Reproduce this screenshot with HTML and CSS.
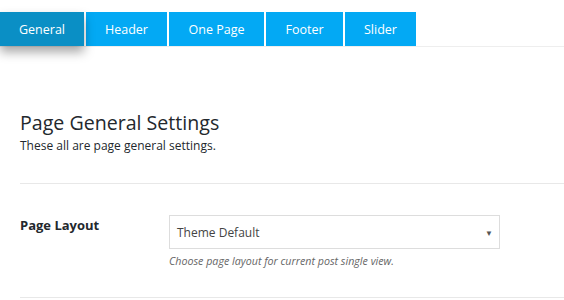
FILE: index.html
```html
<!DOCTYPE html>
<html>
<head>
<meta charset="utf-8">
<link rel="stylesheet" href="styles.css">
</head>
<body>
<div class="tabs">
  <div class="tab active" style="width:84px">General</div>
  <div class="tab" style="width:81px">Header</div>
  <div class="tab" style="width:95px">One Page</div>
  <div class="tab" style="width:77px">Footer</div>
  <div class="tab" style="width:71px">Slider</div>
</div>
<div class="content">
  <div class="intro">
    <h2 class="title">Page General Settings</h2>
    <p class="desc">These all are page general settings.</p>
  </div>
  <div class="row">
    <div class="label">Page Layout</div>
    <div class="field">
      <div class="select"><span>Theme Default</span><span class="arrow">▼</span></div>
      <div class="help">Choose page layout for current post single view.</div>
    </div>
  </div>
</div>
</body>
</html>
```
FILE: styles.css
```css
html, body { margin: 0; padding: 0; background: #fff; }
body { font-family: "Open Sans", "Noto Sans", sans-serif; color: #23282d; width: 564px; height: 300px; overflow: hidden; }
.tabs { display: flex; gap: 2px; margin-top: 12px; border-bottom: 1px solid #eeeeee; height: 34px; }
.tab { height: 34px; background: #03a9f4; color: #fff; font-size: 12.5px; display: flex; align-items: center; justify-content: center; box-sizing: border-box; }
.tab.active { background: #0a8fc5; box-shadow: 0 6px 10px rgba(0,0,0,0.35); position: relative; z-index: 1; }
.content { padding-left: 20px; }
.intro { padding-top: 63px; padding-bottom: 29px; border-bottom: 1px solid #e8e8e8; }
.title { margin: 0; font-size: 19.6px; font-weight: 400; line-height: 26px; color: #23282d; }
.desc { margin: 2px 0 0; font-size: 12px; line-height: 16px; color: #23282d; }
.row { display: flex; padding-top: 31px; height: 82px; border-bottom: 1px solid #e8e8e8; }
.label { width: 149px; font-size: 13px; font-weight: 700; padding-top: 1px; }
.field { width: 331px; }
.select { height: 34px; box-sizing: border-box; border: 1px solid #dddddd; display: flex; align-items: center; justify-content: space-between; padding: 0 6px 0 7px; font-size: 12px; color: #444; }
.arrow { font-size: 8px; color: #555; }
.help { margin-top: 5px; font-size: 10.7px; font-style: italic; color: #666; }
```
